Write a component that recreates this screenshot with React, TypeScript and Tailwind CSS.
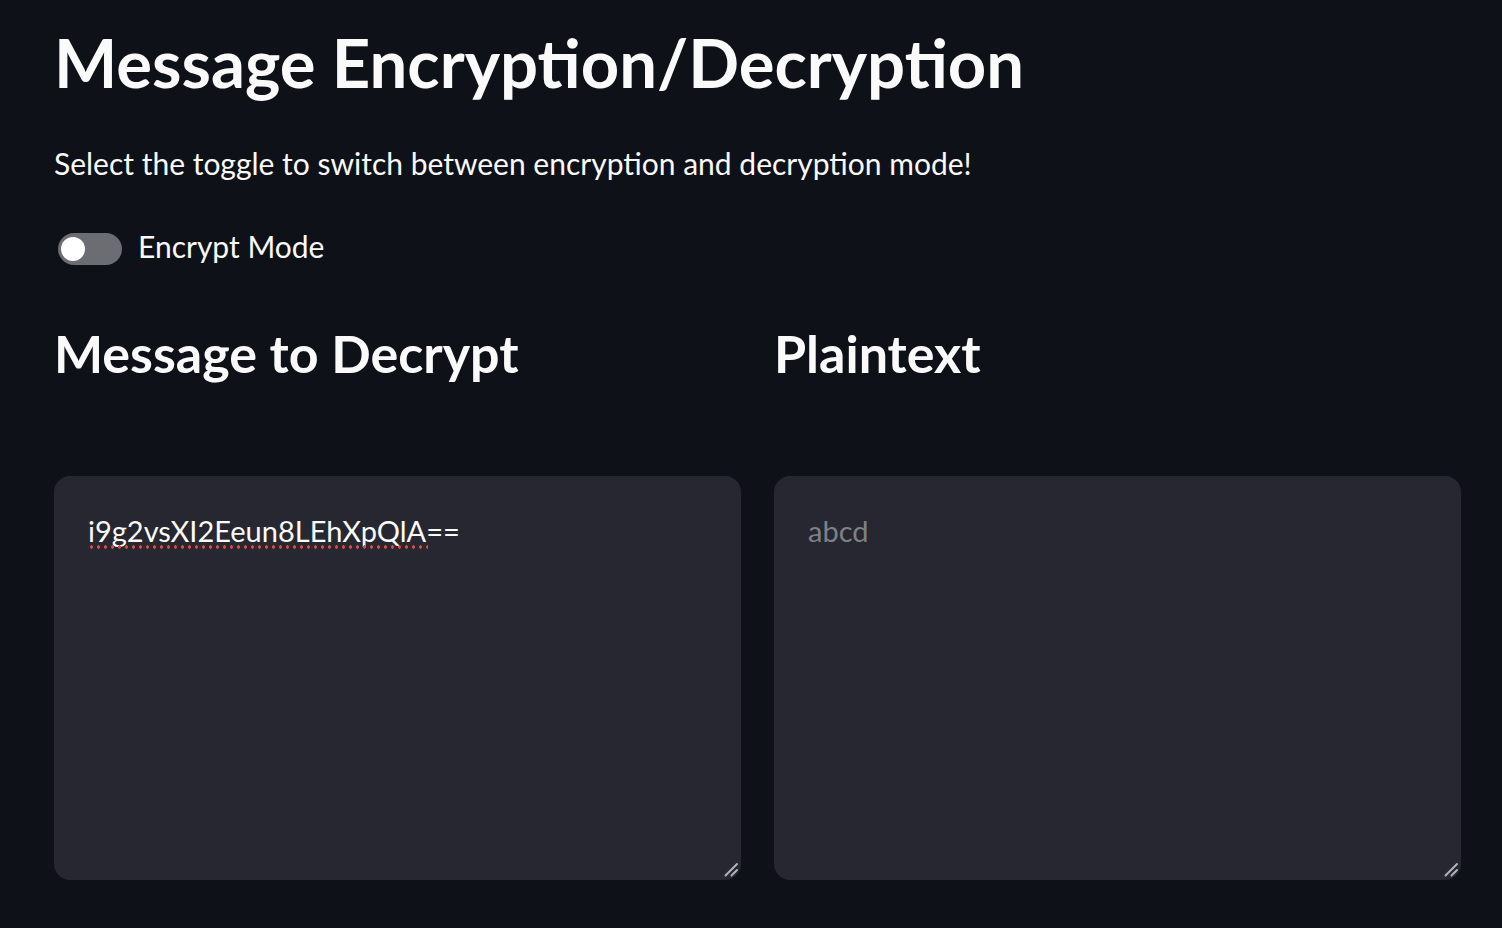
import React from "react";

function Grip() {
  return (
    <svg
      className="pointer-events-none absolute right-[2px] bottom-[2px]"
      width="16"
      height="16"
      viewBox="0 0 16 16"
    >
      <line x1="14" y1="2" x2="2.5" y2="13.5" stroke="#b4b4b8" strokeWidth="2" strokeLinecap="round" />
      <line x1="14" y1="8" x2="8.5" y2="13.5" stroke="#b4b4b8" strokeWidth="2" strokeLinecap="round" />
    </svg>
  );
}

const font = { fontFamily: "Lato, 'Noto Sans', sans-serif" };

export default function App() {
  return (
    <div
      className="min-h-screen w-full bg-[#0e1117] text-[#fafafa] pl-[54px] pr-[41px] [color-scheme:dark]"
      style={font}
    >
      <h1 className="pt-[22px] text-[67px] leading-[1.2] font-bold">
        Message Encryption/Decryption
      </h1>
      <p className="mt-[43px] text-[30px] leading-[1.2]">
        Select the toggle to switch between encryption and decryption mode!
      </p>
      <div className="mt-[52px] ml-1 flex items-start gap-4 h-8">
        <div className="relative w-16 h-8 rounded-full bg-[#6c6d72] shrink-0">
          <div className="absolute left-[3px] top-1 w-6 h-6 rounded-full bg-white" />
        </div>
        <span className="-mt-[3px] text-[30px] leading-[32px]">Encrypt Mode</span>
      </div>
      <div className="grid grid-cols-2 gap-[33px] mt-[57px]">
        <div className="flex flex-col">
          <h3 className="text-[52px] leading-[1.2] font-bold">Message to Decrypt</h3>
          <div className="relative mt-[91px]">
            <textarea
              readOnly
              spellCheck={false}
              value="i9g2vsXI2Eeun8LEhXpQlA=="
              className="block w-full h-[404px] resize-none rounded-2xl bg-[#262730] pl-[34px] pr-4 pt-[38px] text-[29px] leading-[1.2] text-[#fafafa] outline-none"
              style={font}
            />
            <div className="pointer-events-none absolute left-[34px] top-[69px] w-[340px] h-[4px] bg-[radial-gradient(circle,#d9493f_1.5px,transparent_1.9px)] bg-[length:7px_4px]" />
            <Grip />
          </div>
        </div>
        <div className="flex flex-col">
          <h3 className="text-[52px] leading-[1.2] font-bold">Plaintext</h3>
          <div className="relative mt-[91px]">
            <textarea
              placeholder="abcd"
              className="block w-full h-[404px] resize-none rounded-2xl bg-[#262730] pl-[34px] pr-4 pt-[38px] text-[29px] leading-[1.2] text-[#fafafa] placeholder:text-[#7f8087] outline-none"
              style={font}
            />
            <Grip />
          </div>
        </div>
      </div>
    </div>
  );
}
